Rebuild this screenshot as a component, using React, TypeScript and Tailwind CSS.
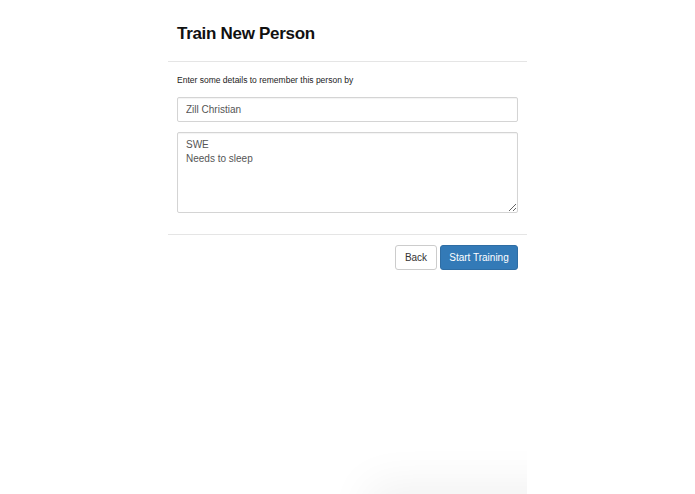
import { useState } from "react";

export default function App() {
  const [name, setName] = useState("Zill Christian");
  const [notes, setNotes] = useState("SWE\nNeeds to sleep");

  return (
    <div
      className="relative w-full h-[494px] bg-white overflow-hidden"
      style={{ fontFamily: '"Liberation Sans", Arial, sans-serif' }}
    >
      <div className="mx-auto w-[359px] bg-white">
        {/* header */}
        <div className="px-[9px] pt-[21px] pb-[14px] border-b border-[#e5e5e5]">
          <h4 className="text-[17px] leading-[26px] font-bold tracking-[-0.3px] text-[#111]">
            Train New Person
          </h4>
        </div>

        {/* body */}
        <div className="px-[9px] pt-[12px] pb-[21px]">
          <p className="text-[8.5px] leading-[12px] text-[#222] mb-[11px]">
            Enter some details to remember this person by
          </p>
          <input
            className="block w-full h-[25px] px-[8px] text-[10px] text-[#555] border border-[#d4d4d4] rounded-[2px] shadow-[inset_0_1px_1px_rgba(0,0,0,0.05)] outline-none"
            value={name}
            onChange={(e) => setName(e.target.value)}
          />
          <textarea
            className="block w-full h-[81px] mt-[10px] px-[8px] pt-[5px] text-[10px] leading-[14px] text-[#555] border border-[#d4d4d4] rounded-[2px] shadow-[inset_0_1px_1px_rgba(0,0,0,0.05)] outline-none"
            value={notes}
            onChange={(e) => setNotes(e.target.value)}
          />
        </div>

        {/* footer */}
        <div className="flex justify-end gap-[3px] pl-[10px] pr-[9px] py-[10px] border-t border-[#e5e5e5]">
          <button className="w-[42px] h-[25px] text-[10px] text-[#333] bg-white border border-[#ccc] rounded-[3px]">
            Back
          </button>
          <button className="w-[78px] h-[25px] text-[10px] text-white bg-[#337ab7] border border-[#2e6da4] rounded-[3px]">
            Start Training
          </button>
        </div>
      </div>

      {/* faint shadow of something below the fold */}
      <div className="absolute left-0 bottom-0 w-[527px] h-[50px] overflow-hidden">
        <div className="absolute left-[390px] top-[62px] w-[300px] h-[60px] shadow-[0_0_45px_22px_rgba(0,0,0,0.06)]" />
      </div>
    </div>
  );
}
